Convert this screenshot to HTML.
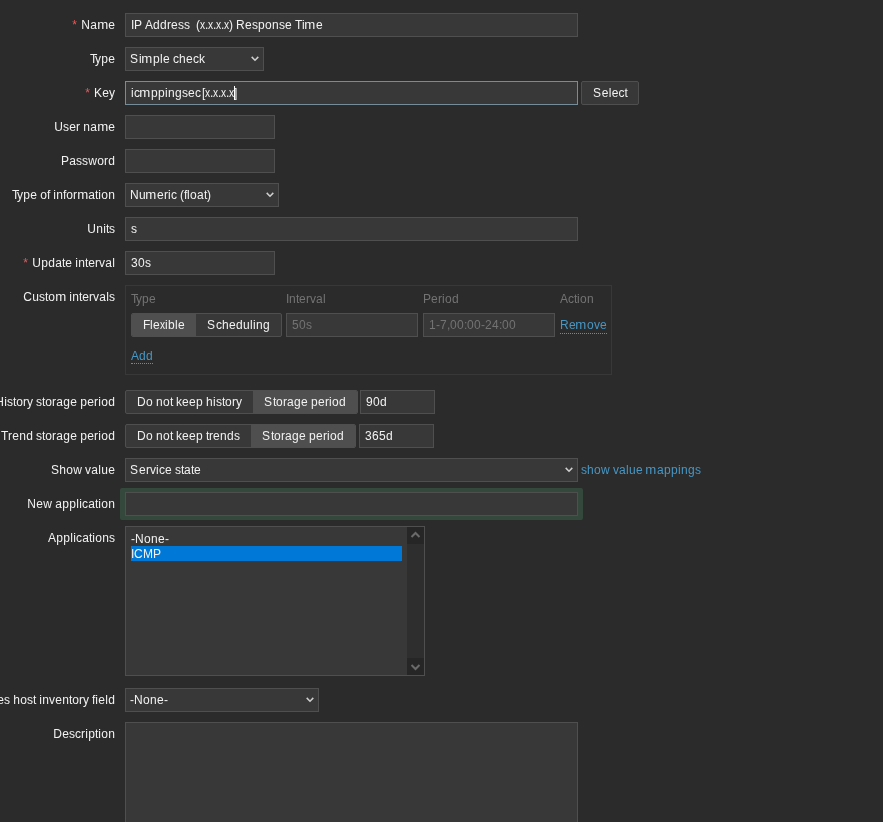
<!DOCTYPE html>
<html><head><meta charset="utf-8">
<style>
*{box-sizing:border-box;margin:0;padding:0}
html,body{width:883px;height:822px;overflow:hidden;background:#2b2b2b;color:#f2f2f2;font-family:"Liberation Sans",sans-serif;font-size:12px}
.a{position:absolute}
.lbl{position:absolute;right:768px;height:24px;line-height:24px;white-space:nowrap;text-align:right}
.ast{color:#e45959;margin-right:4px}
.in{position:absolute;left:125px;height:24px;background:#383838;border:1px solid #4f4f4f;line-height:22px;padding-left:5px;white-space:nowrap}
.sel{padding-left:4px}
.chev{position:absolute;top:8px;width:10px;height:7px}
.btn{position:absolute;height:24px;background:#383838;border:1px solid #4f4f4f;border-radius:2px;line-height:22px;text-align:center;white-space:nowrap}
.seg{position:absolute;height:24px;border:1px solid #4f4f4f;border-radius:2px;overflow:hidden;display:flex;background:#383838}
.seg span{display:block;line-height:22px;padding:0 11px;white-space:nowrap}
.seg .on{background:#4f4f4f}
.link{color:#4796c4;border-bottom:1px dotted #4796c4;padding-bottom:1px}
.hdr{color:#737373;position:absolute;line-height:14px}
.dis{color:#737373}
i{font-style:normal;display:inline-block}.sx{transform:translateX(-0.5px) scaleX(0.85)}.sm{transform:translateX(-0.2px) scaleX(1.1)}.c3{width:3px}.c4{width:4px}.c5{width:5px}.c6{width:6px}.c7{width:7px}.c8{width:8px}.c9{width:9px}.c10{width:10px}.c11{width:11px}</style></head><body><div id="w" style="position:absolute;left:0;top:0;width:883px;height:822px;will-change:transform">

<div class="lbl" style="top:13px"><span class="ast"><i class="c5">*</i></span><i class="c9">N</i><i class="c7">a</i><i class="c11 sm">m</i><i class="c7">e</i></div>
<div class="in" style="top:13px;width:453px"><i class="c3">I</i><i class="c8">P</i><i class="c3">&nbsp;</i><i class="c8">A</i><i class="c7">d</i><i class="c7">d</i><i class="c4">r</i><i class="c7">e</i><i class="c6">s</i><i class="c6">s</i><i class="c3"> </i><i class="c3">&nbsp;</i><i class="c4">(</i><i class="c5 sx">x</i><i class="c3">.</i><i class="c5 sx">x</i><i class="c3">.</i><i class="c5 sx">x</i><i class="c3">.</i><i class="c5 sx">x</i><i class="c4">)</i><i class="c3">&nbsp;</i><i class="c9">R</i><i class="c7">e</i><i class="c6">s</i><i class="c7">p</i><i class="c7">o</i><i class="c7">n</i><i class="c6">s</i><i class="c7">e</i><i class="c3">&nbsp;</i><i class="c7">T</i><i class="c3">i</i><i class="c11 sm">m</i><i class="c7">e</i></div>

<div class="lbl" style="top:47px"><i class="c5">T</i><i class="c6">y</i><i class="c7">p</i><i class="c7">e</i></div>
<div class="in sel" style="top:47px;width:139px"><i class="c9">S</i><i class="c3">i</i><i class="c11 sm">m</i><i class="c7">p</i><i class="c3">l</i><i class="c7">e</i><i class="c3">&nbsp;</i><i class="c6">c</i><i class="c7">h</i><i class="c7">e</i><i class="c6">c</i><i class="c6">k</i><svg class="chev" style="left:125px" viewBox="0 0 10 7"><polyline points="0.7,0.9 4,4.2 7.3,0.9" fill="none" stroke="#cfcfcf" stroke-width="1.5"/></svg></div>

<div class="lbl" style="top:81px"><span class="ast"><i class="c5">*</i></span><i class="c8">K</i><i class="c7">e</i><i class="c6">y</i></div>
<div class="in" style="top:81px;width:453px;border-color:#768d99"><i class="c3">i</i><i class="c6">c</i><i class="c11 sm">m</i><i class="c7">p</i><i class="c7">p</i><i class="c3">i</i><i class="c7">n</i><i class="c7">g</i><i class="c6">s</i><i class="c7">e</i><i class="c6">c</i><b style="display:inline-block;width:1px"></b><i class="c3">[</i><i class="c5 sx">x</i><i class="c3">.</i><i class="c5 sx">x</i><i class="c3">.</i><i class="c5 sx">x</i><i class="c3">.</i><i class="c5 sx">x</i><i class="c3">]</i><b class="a" style="left:108px;top:4px;width:1px;height:14px;background:#fff"></b></div>
<div class="btn" style="top:81px;left:581px;width:58px"><i class="c9">S</i><i class="c7">e</i><i class="c3">l</i><i class="c7">e</i><i class="c6">c</i><i class="c3">t</i></div>

<div class="lbl" style="top:115px"><i class="c9">U</i><i class="c6">s</i><i class="c7">e</i><i class="c4">r</i><i class="c3">&nbsp;</i><i class="c7">n</i><i class="c7">a</i><i class="c11 sm">m</i><i class="c7">e</i></div>
<div class="in" style="top:115px;width:150px"></div>

<div class="lbl" style="top:149px"><i class="c8">P</i><i class="c7">a</i><i class="c6">s</i><i class="c6">s</i><i class="c9">w</i><i class="c7">o</i><i class="c4">r</i><i class="c7">d</i></div>
<div class="in" style="top:149px;width:150px"></div>

<div class="lbl" style="top:183px"><i class="c5">T</i><i class="c6">y</i><i class="c7">p</i><i class="c7">e</i><i class="c3">&nbsp;</i><i class="c7">o</i><i class="c3">f</i><i class="c3">&nbsp;</i><i class="c3">i</i><i class="c7">n</i><i class="c3">f</i><i class="c7">o</i><i class="c4">r</i><i class="c11 sm">m</i><i class="c7">a</i><i class="c3">t</i><i class="c3">i</i><i class="c7">o</i><i class="c7">n</i></div>
<div class="in sel" style="top:183px;width:154px"><i class="c9">N</i><i class="c7">u</i><i class="c11 sm">m</i><i class="c7">e</i><i class="c4">r</i><i class="c3">i</i><i class="c6">c</i><i class="c3">&nbsp;</i><i class="c4">(</i><i class="c3">f</i><i class="c3">l</i><i class="c7">o</i><i class="c7">a</i><i class="c3">t</i><i class="c4">)</i><svg class="chev" style="left:140px" viewBox="0 0 10 7"><polyline points="0.7,0.9 4,4.2 7.3,0.9" fill="none" stroke="#cfcfcf" stroke-width="1.5"/></svg></div>

<div class="lbl" style="top:217px"><i class="c9">U</i><i class="c7">n</i><i class="c3">i</i><i class="c3">t</i><i class="c6">s</i></div>
<div class="in" style="top:217px;width:453px"><i class="c6">s</i></div>

<div class="lbl" style="top:251px"><span class="ast"><i class="c5">*</i></span><i class="c9">U</i><i class="c7">p</i><i class="c7">d</i><i class="c7">a</i><i class="c3">t</i><i class="c7">e</i><i class="c3">&nbsp;</i><i class="c3">i</i><i class="c7">n</i><i class="c3">t</i><i class="c7">e</i><i class="c4">r</i><i class="c6">v</i><i class="c7">a</i><i class="c3">l</i></div>
<div class="in" style="top:251px;width:150px"><i class="c7">3</i><i class="c7">0</i><i class="c6">s</i></div>

<div class="lbl" style="top:285px"><i class="c9">C</i><i class="c7">u</i><i class="c6">s</i><i class="c3">t</i><i class="c7">o</i><i class="c11 sm">m</i><i class="c3">&nbsp;</i><i class="c3">i</i><i class="c7">n</i><i class="c3">t</i><i class="c7">e</i><i class="c4">r</i><i class="c6">v</i><i class="c7">a</i><i class="c3">l</i><i class="c6">s</i></div>
<div class="a" style="left:125px;top:285px;width:487px;height:90px;border:1px solid #383838"></div>
<div class="hdr" style="left:131px;top:292px"><i class="c5">T</i><i class="c6">y</i><i class="c7">p</i><i class="c7">e</i></div>
<div class="hdr" style="left:286px;top:292px"><i class="c3">I</i><i class="c7">n</i><i class="c3">t</i><i class="c7">e</i><i class="c4">r</i><i class="c6">v</i><i class="c7">a</i><i class="c3">l</i></div>
<div class="hdr" style="left:423px;top:292px"><i class="c8">P</i><i class="c7">e</i><i class="c4">r</i><i class="c3">i</i><i class="c7">o</i><i class="c7">d</i></div>
<div class="hdr" style="left:560px;top:292px"><i class="c8">A</i><i class="c6">c</i><i class="c3">t</i><i class="c3">i</i><i class="c7">o</i><i class="c7">n</i></div>
<div class="seg" style="left:131px;top:313px"><span class="on"><i class="c7">F</i><i class="c3">l</i><i class="c7">e</i><i class="c5 sx">x</i><i class="c3">i</i><i class="c7">b</i><i class="c3">l</i><i class="c7">e</i></span><span><i class="c9">S</i><i class="c6">c</i><i class="c7">h</i><i class="c7">e</i><i class="c7">d</i><i class="c7">u</i><i class="c3">l</i><i class="c3">i</i><i class="c7">n</i><i class="c7">g</i></span></div>
<div class="in dis" style="left:286px;top:313px;width:132px"><i class="c7">5</i><i class="c7">0</i><i class="c6">s</i></div>
<div class="in dis" style="left:423px;top:313px;width:132px"><i class="c7">1</i><i class="c4">-</i><i class="c7">7</i><i class="c3">,</i><i class="c7">0</i><i class="c7">0</i><i class="c3">:</i><i class="c7">0</i><i class="c7">0</i><i class="c4">-</i><i class="c7">2</i><i class="c7">4</i><i class="c3">:</i><i class="c7">0</i><i class="c7">0</i></div>
<div class="a" style="left:560px;top:318px;line-height:14px"><span class="link"><i class="c9">R</i><i class="c7">e</i><i class="c11 sm">m</i><i class="c7">o</i><i class="c6">v</i><i class="c7">e</i></span></div>
<div class="a" style="left:131px;top:349px;line-height:14px"><span class="link" style="padding-bottom:0"><i class="c8">A</i><i class="c7">d</i><i class="c7">d</i></span></div>

<div class="lbl" style="top:390px"><i class="c9">H</i><i class="c3">i</i><i class="c6">s</i><i class="c3">t</i><i class="c7">o</i><i class="c4">r</i><i class="c6">y</i><i class="c3">&nbsp;</i><i class="c6">s</i><i class="c3">t</i><i class="c7">o</i><i class="c4">r</i><i class="c7">a</i><i class="c7">g</i><i class="c7">e</i><i class="c3">&nbsp;</i><i class="c7">p</i><i class="c7">e</i><i class="c4">r</i><i class="c3">i</i><i class="c7">o</i><i class="c7">d</i></div>
<div class="seg" style="left:125px;top:390px"><span><i class="c9">D</i><i class="c7">o</i><i class="c3">&nbsp;</i><i class="c7">n</i><i class="c7">o</i><i class="c3">t</i><i class="c3">&nbsp;</i><i class="c6">k</i><i class="c7">e</i><i class="c7">e</i><i class="c7">p</i><i class="c3">&nbsp;</i><i class="c7">h</i><i class="c3">i</i><i class="c6">s</i><i class="c3">t</i><i class="c7">o</i><i class="c4">r</i><i class="c6">y</i></span><span class="on"><i class="c9">S</i><i class="c3">t</i><i class="c7">o</i><i class="c4">r</i><i class="c7">a</i><i class="c7">g</i><i class="c7">e</i><i class="c3">&nbsp;</i><i class="c7">p</i><i class="c7">e</i><i class="c4">r</i><i class="c3">i</i><i class="c7">o</i><i class="c7">d</i></span></div>
<div class="in" style="left:360px;top:390px;width:75px"><i class="c7">9</i><i class="c7">0</i><i class="c7">d</i></div>

<div class="lbl" style="top:424px"><i class="c7">T</i><i class="c4">r</i><i class="c7">e</i><i class="c7">n</i><i class="c7">d</i><i class="c3">&nbsp;</i><i class="c6">s</i><i class="c3">t</i><i class="c7">o</i><i class="c4">r</i><i class="c7">a</i><i class="c7">g</i><i class="c7">e</i><i class="c3">&nbsp;</i><i class="c7">p</i><i class="c7">e</i><i class="c4">r</i><i class="c3">i</i><i class="c7">o</i><i class="c7">d</i></div>
<div class="seg" style="left:125px;top:424px"><span><i class="c9">D</i><i class="c7">o</i><i class="c3">&nbsp;</i><i class="c7">n</i><i class="c7">o</i><i class="c3">t</i><i class="c3">&nbsp;</i><i class="c6">k</i><i class="c7">e</i><i class="c7">e</i><i class="c7">p</i><i class="c3">&nbsp;</i><i class="c3">t</i><i class="c4">r</i><i class="c7">e</i><i class="c7">n</i><i class="c7">d</i><i class="c6">s</i></span><span class="on"><i class="c9">S</i><i class="c3">t</i><i class="c7">o</i><i class="c4">r</i><i class="c7">a</i><i class="c7">g</i><i class="c7">e</i><i class="c3">&nbsp;</i><i class="c7">p</i><i class="c7">e</i><i class="c4">r</i><i class="c3">i</i><i class="c7">o</i><i class="c7">d</i></span></div>
<div class="in" style="left:359px;top:424px;width:75px"><i class="c7">3</i><i class="c7">6</i><i class="c7">5</i><i class="c7">d</i></div>

<div class="lbl" style="top:458px"><i class="c9">S</i><i class="c7">h</i><i class="c7">o</i><i class="c9">w</i><i class="c3">&nbsp;</i><i class="c6">v</i><i class="c7">a</i><i class="c3">l</i><i class="c7">u</i><i class="c7">e</i></div>
<div class="in sel" style="top:458px;width:453px"><i class="c9">S</i><i class="c7">e</i><i class="c4">r</i><i class="c6">v</i><i class="c3">i</i><i class="c6">c</i><i class="c7">e</i><i class="c3">&nbsp;</i><i class="c6">s</i><i class="c3">t</i><i class="c7">a</i><i class="c3">t</i><i class="c7">e</i><svg class="chev" style="left:439px" viewBox="0 0 10 7"><polyline points="0.7,0.9 4,4.2 7.3,0.9" fill="none" stroke="#cfcfcf" stroke-width="1.5"/></svg></div>
<div class="a" style="left:581px;top:463px;line-height:14px;color:#4796c4"><i class="c6">s</i><i class="c7">h</i><i class="c7">o</i><i class="c9">w</i><i class="c3">&nbsp;</i><i class="c6">v</i><i class="c7">a</i><i class="c3">l</i><i class="c7">u</i><i class="c7">e</i><i class="c3">&nbsp;</i><i class="c11 sm">m</i><i class="c7">a</i><i class="c7">p</i><i class="c7">p</i><i class="c3">i</i><i class="c7">n</i><i class="c7">g</i><i class="c6">s</i></div>

<div class="lbl" style="top:492px"><i class="c9">N</i><i class="c7">e</i><i class="c9">w</i><i class="c3">&nbsp;</i><i class="c7">a</i><i class="c7">p</i><i class="c7">p</i><i class="c3">l</i><i class="c3">i</i><i class="c6">c</i><i class="c7">a</i><i class="c3">t</i><i class="c3">i</i><i class="c7">o</i><i class="c7">n</i></div>
<div class="a" style="left:120px;top:488px;width:463px;height:32px;background:#34483c;border-radius:2px"></div>
<div class="in" style="top:492px;width:453px"></div>

<div class="lbl" style="top:526px"><i class="c8">A</i><i class="c7">p</i><i class="c7">p</i><i class="c3">l</i><i class="c3">i</i><i class="c6">c</i><i class="c7">a</i><i class="c3">t</i><i class="c3">i</i><i class="c7">o</i><i class="c7">n</i><i class="c6">s</i></div>
<div class="in" style="top:526px;width:300px;height:150px;padding:4px 0 0 5px;line-height:15px">
  <div style="height:15px"><span style="position:relative;top:1px"><i class="c4">-</i><i class="c9">N</i><i class="c7">o</i><i class="c7">n</i><i class="c7">e</i><i class="c4">-</i></span></div>
  <div style="background:#0078d7;width:271px;height:15px"><span style="position:relative;top:1px"><i class="c3">I</i><i class="c9">C</i><i class="c10">M</i><i class="c8">P</i></span></div>
  <div class="a" style="left:281px;top:0;width:17px;height:148px;background:#2e2e2e"></div>
  <div class="a" style="left:281px;top:0;width:17px;height:17px;background:#262626"><svg width="17" height="17" style="position:absolute;left:0;top:0"><polyline points="4.5,10 8.5,6 12.5,10" fill="none" stroke="#6a6a6a" stroke-width="2"/></svg></div>
  <div class="a" style="left:281px;top:131px;width:17px;height:17px;background:#262626"><svg width="17" height="17" style="position:absolute;left:0;top:0"><polyline points="4.5,7 8.5,11 12.5,7" fill="none" stroke="#6a6a6a" stroke-width="2"/></svg></div>
</div>

<div class="lbl" style="top:688px"><i class="c8">P</i><i class="c7">o</i><i class="c7">p</i><i class="c7">u</i><i class="c3">l</i><i class="c7">a</i><i class="c3">t</i><i class="c7">e</i><i class="c6">s</i><i class="c3">&nbsp;</i><i class="c7">h</i><i class="c7">o</i><i class="c6">s</i><i class="c3">t</i><i class="c3">&nbsp;</i><i class="c3">i</i><i class="c7">n</i><i class="c6">v</i><i class="c7">e</i><i class="c7">n</i><i class="c3">t</i><i class="c7">o</i><i class="c4">r</i><i class="c6">y</i><i class="c3">&nbsp;</i><i class="c3">f</i><i class="c3">i</i><i class="c7">e</i><i class="c3">l</i><i class="c7">d</i></div>
<div class="in sel" style="top:688px;width:194px"><i class="c4">-</i><i class="c9">N</i><i class="c7">o</i><i class="c7">n</i><i class="c7">e</i><i class="c4">-</i><svg class="chev" style="left:180px" viewBox="0 0 10 7"><polyline points="0.7,0.9 4,4.2 7.3,0.9" fill="none" stroke="#cfcfcf" stroke-width="1.5"/></svg></div>

<div class="lbl" style="top:722px"><i class="c9">D</i><i class="c7">e</i><i class="c6">s</i><i class="c6">c</i><i class="c4">r</i><i class="c3">i</i><i class="c7">p</i><i class="c3">t</i><i class="c3">i</i><i class="c7">o</i><i class="c7">n</i></div>
<div class="in" style="top:722px;width:453px;height:120px"></div>

</div></body></html>
